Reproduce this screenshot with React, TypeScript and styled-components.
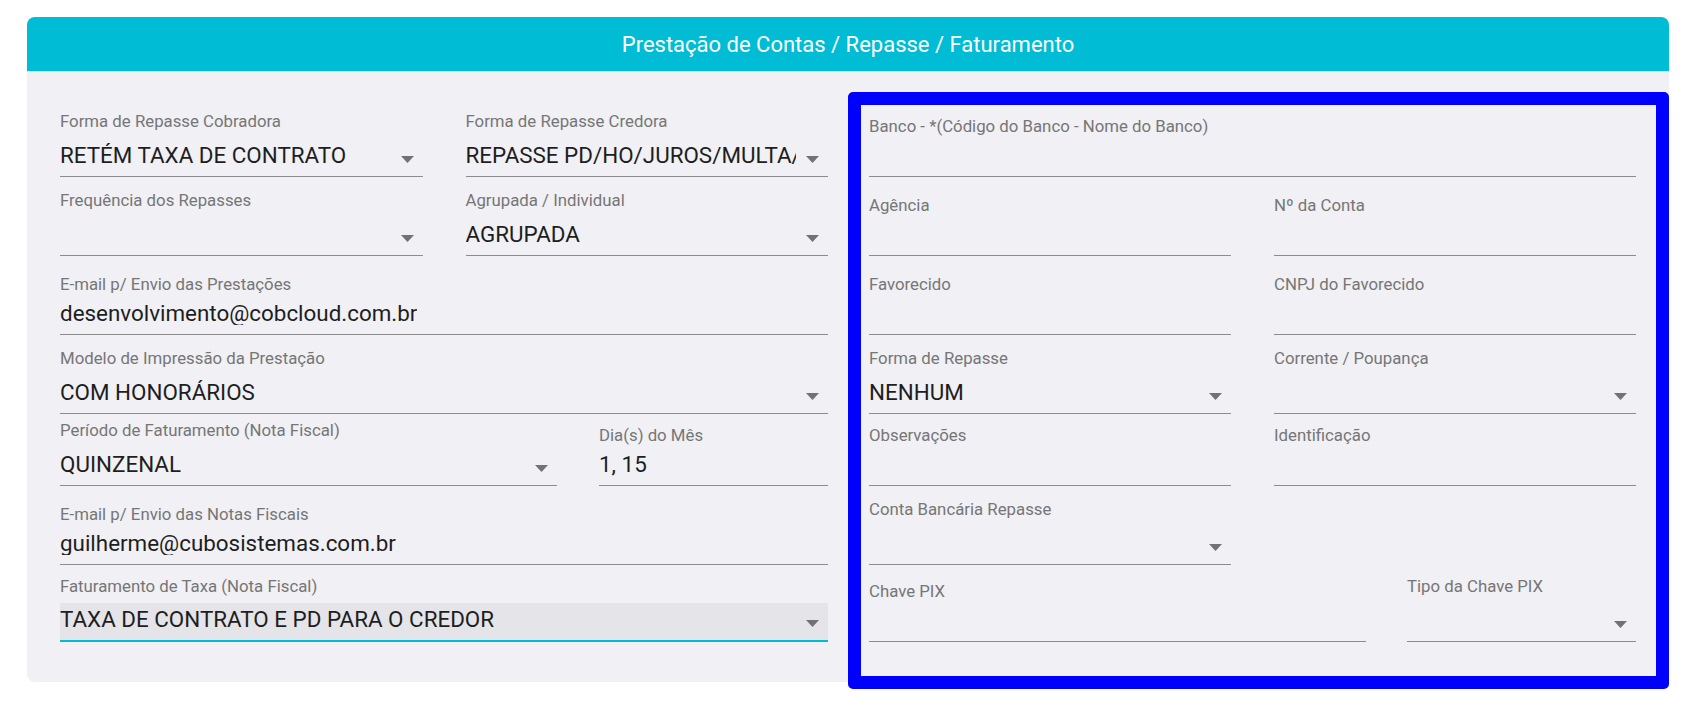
import React from "react";
import styled, { createGlobalStyle } from "styled-components";

const GlobalStyle = createGlobalStyle`
  body {
    margin: 0;
    background: #ffffff;
    font-family: Roboto, "Liberation Sans", Arial, sans-serif;
  }
  * {
    box-sizing: border-box;
  }
`;

type FieldKind = "text" | "select" | "filled";

interface FieldProps {
  label: string;
  value?: string;
  kind?: FieldKind;
}

const Field = ({ label, value, kind = "text" }: FieldProps) => (
  <FieldWrap>
    <Label>{label}</Label>
    <Control $kind={kind}>
      <Value>{value ?? ""}</Value>
      {kind !== "text" && (
        <Caret viewBox="0 0 13 7">
          <polygon points="0,0 13,0 6.5,7" />
        </Caret>
      )}
    </Control>
  </FieldWrap>
);

export default function App() {
  return (
    <>
      <GlobalStyle />
      <Page>
        <Card>
          <CardHeader>Prestação de Contas / Repasse / Faturamento</CardHeader>
          <CardBody>
            <LeftColumn>
              <Row $h={79} $cols="1fr 1fr">
                <Field label="Forma de Repasse Cobradora" value="RETÉM TAXA DE CONTRATO" kind="select" />
                <Field label="Forma de Repasse Credora" value="REPASSE PD/HO/JUROS/MULTA/ENCARGOS" kind="select" />
              </Row>
              <Row $h={79} $cols="1fr 1fr">
                <Field label="Frequência dos Repasses" kind="select" />
                <Field label="Agrupada / Individual" value="AGRUPADA" kind="select" />
              </Row>
              <Row $h={79}>
                <Field label="E-mail p/ Envio das Prestações" value="desenvolvimento@cobcloud.com.br" />
              </Row>
              <Row $h={79}>
                <Field label="Modelo de Impressão da Prestação" value="COM HONORÁRIOS" kind="select" />
              </Row>
              <Row $h={72} $cols="497px 1fr" $gap={42}>
                <Field label="Período de Faturamento (Nota Fiscal)" value="QUINZENAL" kind="select" />
                <Field label="Dia(s) do Mês" value="1, 15" />
              </Row>
              <Row $h={79}>
                <Field label="E-mail p/ Envio das Notas Fiscais" value="guilherme@cubosistemas.com.br" />
              </Row>
              <Row $h={77}>
                <Field label="Faturamento de Taxa (Nota Fiscal)" value="TAXA DE CONTRATO E PD PARA O CREDOR" kind="filled" />
              </Row>
            </LeftColumn>

            <BankBox>
              <Row $h={72}>
                <Field label="Banco - *(Código do Banco - Nome do Banco)" />
              </Row>
              <Row $h={79} $cols="1fr 1fr">
                <Field label="Agência" />
                <Field label="Nº da Conta" />
              </Row>
              <Row $h={79} $cols="1fr 1fr">
                <Field label="Favorecido" />
                <Field label="CNPJ do Favorecido" />
              </Row>
              <Row $h={79} $cols="1fr 1fr">
                <Field label="Forma de Repasse" value="NENHUM" kind="select" />
                <Field label="Corrente / Poupança" kind="select" />
              </Row>
              <Row $h={72} $cols="1fr 1fr">
                <Field label="Observações" />
                <Field label="Identificação" />
              </Row>
              <Row $h={79} $cols="1fr 1fr">
                <Field label="Conta Bancária Repasse" kind="select" />
                <div />
              </Row>
              <Row $h={77} $cols="497px 1fr" $gap={41}>
                <Field label="Chave PIX" />
                <Field label="Tipo da Chave PIX" kind="select" />
              </Row>
            </BankBox>
          </CardBody>
        </Card>
      </Page>
    </>
  );
}

const Page = styled.div`
  padding: 17px 35px 20px 27px;
`;

const Card = styled.section`
  background: #f0f0f5;
  border-radius: 8px;
`;

const CardHeader = styled.header`
  height: 55px;
  display: flex;
  align-items: center;
  justify-content: center;
  background: #00bcd4;
  border-radius: 8px 8px 0 0;
  border-bottom: 1px solid #dcdce2;
  color: #ffffff;
  font-size: 22px;
`;

/* the bank box pokes 7px out under the card's bottom edge */
const CardBody = styled.div`
  display: flex;
  align-items: flex-start;
  gap: 20px;
  padding-left: 33px;
`;

const LeftColumn = styled.div`
  width: 768px;
  flex-shrink: 0;
  padding-top: 26px;
  display: flex;
  flex-direction: column;
`;

const BankBox = styled.div`
  flex: 1;
  margin: 20px 0 -7px;
  height: 597px;
  border: 13px solid #0000ff;
  border-radius: 5px;
  padding: 0 20px 0 8px;
  display: flex;
  flex-direction: column;
`;

const Row = styled.div<{ $h: number; $cols?: string; $gap?: number }>`
  height: ${(p) => p.$h}px;
  flex-shrink: 0;
  display: grid;
  grid-template-columns: ${(p) => p.$cols ?? "1fr"};
  column-gap: ${(p) => p.$gap ?? 43}px;
  align-items: end;
`;

const FieldWrap = styled.div`
  display: flex;
  flex-direction: column;
  min-width: 0;
`;

const Label = styled.label`
  font-size: 16.8px;
  line-height: 18px;
  color: #767676;
  white-space: nowrap;
`;

const Control = styled.div<{ $kind: FieldKind }>`
  position: relative;
  display: flex;
  align-items: flex-end;
  height: ${(p) => (p.$kind === "text" ? 42 : p.$kind === "select" ? 47 : 39)}px;
  margin-top: ${(p) => (p.$kind === "filled" ? 8 : 0)}px;
  padding: 0 ${(p) => (p.$kind === "text" ? 0 : 32)}px 9px 0;
  border-bottom: ${(p) => (p.$kind === "filled" ? "2px solid #00bcd4" : "1px solid #8c8c8c")};
  background: ${(p) => (p.$kind === "filled" ? "#e4e4e9" : "transparent")};
`;

const Value = styled.span`
  font-size: 22.4px;
  line-height: 24px;
  color: #1e1e1e;
  white-space: nowrap;
  overflow: hidden;
`;

const Caret = styled.svg`
  position: absolute;
  right: 9px;
  bottom: 13px;
  width: 13px;
  height: 7px;
  fill: #727272;
`;
